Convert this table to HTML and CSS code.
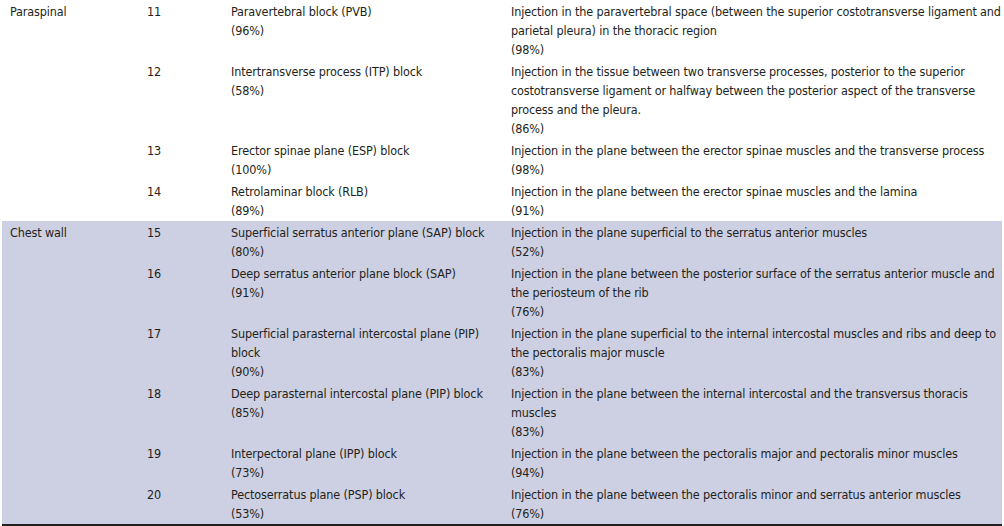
FILE: index.html
```html
<!DOCTYPE html>
<html>
<head>
<meta charset="utf-8">
<link rel="stylesheet" href="styles.css">
</head>
<body>
<table class="blocks">
  <colgroup>
    <col class="c-region"><col class="c-num"><col class="c-name"><col class="c-desc">
  </colgroup>
  <tbody class="group">
    <tr>
      <td>Paraspinal</td><td>11</td>
      <td>Paravertebral block (PVB)<br>(96%)</td>
      <td>Injection in the paravertebral space (between the superior costotransverse ligament and<br>parietal pleura) in the thoracic region<br>(98%)</td>
    </tr>
    <tr>
      <td></td><td>12</td>
      <td>Intertransverse process (ITP) block<br>(58%)</td>
      <td>Injection in the tissue between two transverse processes, posterior to the superior<br>costotransverse ligament or halfway between the posterior aspect of the transverse<br>process and the pleura.<br>(86%)</td>
    </tr>
    <tr>
      <td></td><td>13</td>
      <td>Erector spinae plane (ESP) block<br>(100%)</td>
      <td>Injection in the plane between the erector spinae muscles and the transverse process<br>(98%)</td>
    </tr>
    <tr>
      <td></td><td>14</td>
      <td>Retrolaminar block (RLB)<br>(89%)</td>
      <td>Injection in the plane between the erector spinae muscles and the lamina<br>(91%)</td>
    </tr>
  </tbody>
  <tbody class="group shaded">
    <tr>
      <td>Chest wall</td><td>15</td>
      <td>Superficial serratus anterior plane (SAP) block<br>(80%)</td>
      <td>Injection in the plane superficial to the serratus anterior muscles<br>(52%)</td>
    </tr>
    <tr>
      <td></td><td>16</td>
      <td>Deep serratus anterior plane block (SAP)<br>(91%)</td>
      <td>Injection in the plane between the posterior surface of the serratus anterior muscle and<br>the periosteum of the rib<br>(76%)</td>
    </tr>
    <tr>
      <td></td><td>17</td>
      <td>Superficial parasternal intercostal plane (PIP)<br>block<br>(90%)</td>
      <td>Injection in the plane superficial to the internal intercostal muscles and ribs and deep to<br>the pectoralis major muscle<br>(83%)</td>
    </tr>
    <tr>
      <td></td><td>18</td>
      <td>Deep parasternal intercostal plane (PIP) block<br>(85%)</td>
      <td>Injection in the plane between the internal intercostal and the transversus thoracis<br>muscles<br>(83%)</td>
    </tr>
    <tr>
      <td></td><td>19</td>
      <td>Interpectoral plane (IPP) block<br>(73%)</td>
      <td>Injection in the plane between the pectoralis major and pectoralis minor muscles<br>(94%)</td>
    </tr>
    <tr>
      <td></td><td>20</td>
      <td>Pectoserratus plane (PSP) block<br>(53%)</td>
      <td>Injection in the plane between the pectoralis minor and serratus anterior muscles<br>(76%)</td>
    </tr>
  </tbody>
</table>
</body>
</html>
```
FILE: styles.css
```css
html, body {
  margin: 0;
  padding: 0;
  background: #ffffff;
}
body {
  padding: 0 2px;
  font-family: "DejaVu Sans Condensed", "Liberation Sans", sans-serif;
  font-size: 12.5px;
  letter-spacing: -0.13px;
  line-height: 19px;
  color: #231f20;
}
.blocks {
  width: 1000px;
  border-collapse: collapse;
  table-layout: fixed;
  border-bottom: 2px solid #231f20;
}
.c-region { width: 137px; }
.c-num { width: 84px; }
.c-name { width: 280px; }
.c-desc { width: 499px; }
.blocks td {
  vertical-align: top;
  padding: 2px 0 1px 8px;
  white-space: nowrap;
}
.shaded {
  background: #cdd0e2;
}
```
